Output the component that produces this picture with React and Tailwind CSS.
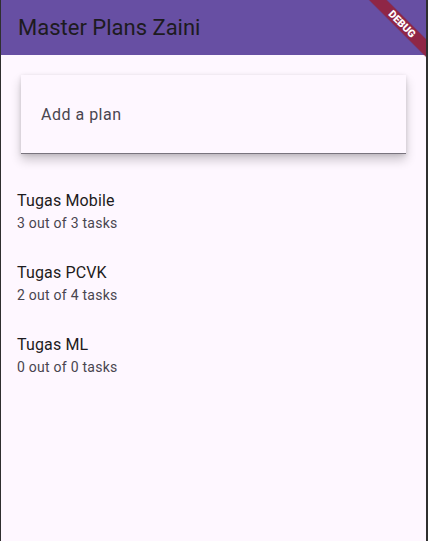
const plans = [
  { name: 'Tugas Mobile', done: 3, total: 3 },
  { name: 'Tugas PCVK', done: 2, total: 4 },
  { name: 'Tugas ML', done: 0, total: 0 },
];

const DebugBanner = () => (
  <svg className="absolute top-0 right-0 z-10" width="60" height="60" viewBox="0 0 60 60">
    <polygon points="2.6,0 21.2,0 60,38.8 60,57.4" fill="#7A1F3D" opacity="0.35" />
    <polygon points="3.4,0 20.4,0 60,39.6 60,56.6" fill="#8F2646" />
    <text
      x="36"
      y="24"
      fill="#ffffff"
      fontSize="10.5"
      fontWeight="900"
      fontFamily="Roboto, sans-serif"
      textAnchor="middle"
      dominantBaseline="central"
      transform="rotate(45 36 24)"
    >
      DEBUG
    </text>
  </svg>
);

const App = () => {
  return (
    <div className="w-[428px] h-[541px] flex flex-col bg-[#FEF7FF] border-l border-r-2 border-[#2f2f2f] font-['Roboto',sans-serif] overflow-hidden">
      {/* App bar */}
      <div className="relative h-[55px] shrink-0 bg-[#674FA3] flex items-center pl-[17px]">
        <h1 className="text-[22px] text-[#1D1B20] leading-7">Master Plans Zaini</h1>
        <DebugBanner />
      </div>

      {/* Add plan field */}
      <div className="m-5 h-[79px] bg-[#FEF7FF] shadow-[0_6px_10px_rgba(0,0,0,0.2),0_1px_4px_rgba(0,0,0,0.12)] border-b border-[#79747E] flex items-center px-5">
        <span className="text-base text-[#49454F] tracking-[0.5px] mt-[2px]">Add a plan</span>
      </div>

      {/* Plan list */}
      <div className="flex flex-col mt-px">
        {plans.map((plan) => (
          <div key={plan.name} className="h-[72px] px-4 flex flex-col justify-center">
            <div className="text-base leading-6 text-[#1D1B20] tracking-[0.15px]">{plan.name}</div>
            <div className="text-sm leading-5 text-[#49454F] tracking-[0.25px]">
              {plan.done} out of {plan.total} tasks
            </div>
          </div>
        ))}
      </div>
    </div>
  );
};

export default App;
